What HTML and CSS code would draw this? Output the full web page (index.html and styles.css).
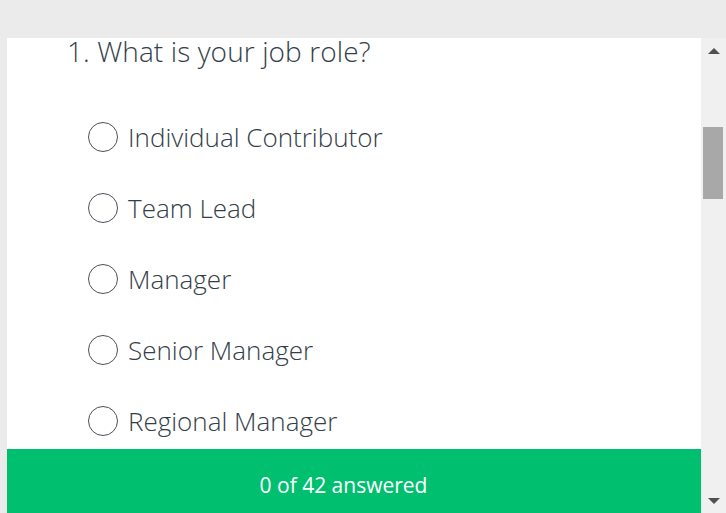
FILE: index.html
```html
<!DOCTYPE html>
<html>
<head>
<meta charset="utf-8">
<link rel="stylesheet" href="styles.css">
</head>
<body>
<div class="top-band"></div>
<div class="frame">
  <div class="panel">
    <div class="content">
      <h1 class="question">1. What is your job role?</h1>
      <ul class="options">
        <li class="option"><span class="radio"></span><span class="label">Individual Contributor</span></li>
        <li class="option"><span class="radio"></span><span class="label">Team Lead</span></li>
        <li class="option"><span class="radio"></span><span class="label">Manager</span></li>
        <li class="option"><span class="radio"></span><span class="label">Senior Manager</span></li>
        <li class="option"><span class="radio"></span><span class="label">Regional Manager</span></li>
      </ul>
    </div>
    <div class="footer">0 of 42 answered</div>
  </div>
  <div class="scrollbar">
    <div class="arrow up"></div>
    <div class="track"><div class="thumb"></div></div>
    <div class="arrow down"></div>
  </div>
</div>
</body>
</html>
```
FILE: styles.css
```css
html, body {
  margin: 0;
  padding: 0;
}
body {
  width: 726px;
  height: 513px;
  overflow: hidden;
  background: #ebebeb;
  font-family: "Open Sans", "Liberation Sans", sans-serif;
}
.top-band {
  height: 38px;
}
.frame {
  display: flex;
  height: 475px;
  padding-left: 7px;
}
.panel {
  width: 694px;
  background: #ffffff;
  display: flex;
  flex-direction: column;
  overflow: hidden;
}
.content {
  flex: 1;
  overflow: hidden;
  padding-left: 60px;
}
.question {
  margin: 0;
  font-size: 28px;
  line-height: 26px;
  font-weight: 300;
  color: #333e48;
  letter-spacing: 0.1px;
}
.options {
  list-style: none;
  margin: 37px 0 0 21px;
  padding: 0;
}
.option {
  display: flex;
  align-items: center;
  height: 71px;
  gap: 10px;
}
.radio {
  width: 28px;
  height: 28px;
  border: 1.5px solid #4a5058;
  border-radius: 50%;
  flex: none;
}
.label {
  font-size: 26px;
  font-weight: 300;
  color: #333e48;
  padding-top: 1px;
}
.footer {
  height: 64px;
  flex: none;
  box-sizing: border-box;
  padding: 8px 21px 0 0;
  background: #00bf6f;
  color: #ffffff;
  display: flex;
  align-items: center;
  justify-content: center;
  font-size: 21px;
  font-weight: 500;
}
.scrollbar {
  width: 25px;
  background: #f0f0f0;
  display: flex;
  flex-direction: column;
}
.arrow {
  height: 25px;
  flex: none;
  display: flex;
  align-items: center;
  justify-content: center;
}
.arrow::before {
  content: "";
  width: 0;
  height: 0;
  border-left: 6px solid transparent;
  border-right: 6px solid transparent;
}
.arrow.up::before {
  border-bottom: 6px solid #505050;
}
.arrow.down::before {
  border-top: 6px solid #505050;
}
.track {
  flex: 1;
  padding: 64px 3px 0 2px;
}
.thumb {
  height: 72px;
  background: #a8a8a8;
}
```
